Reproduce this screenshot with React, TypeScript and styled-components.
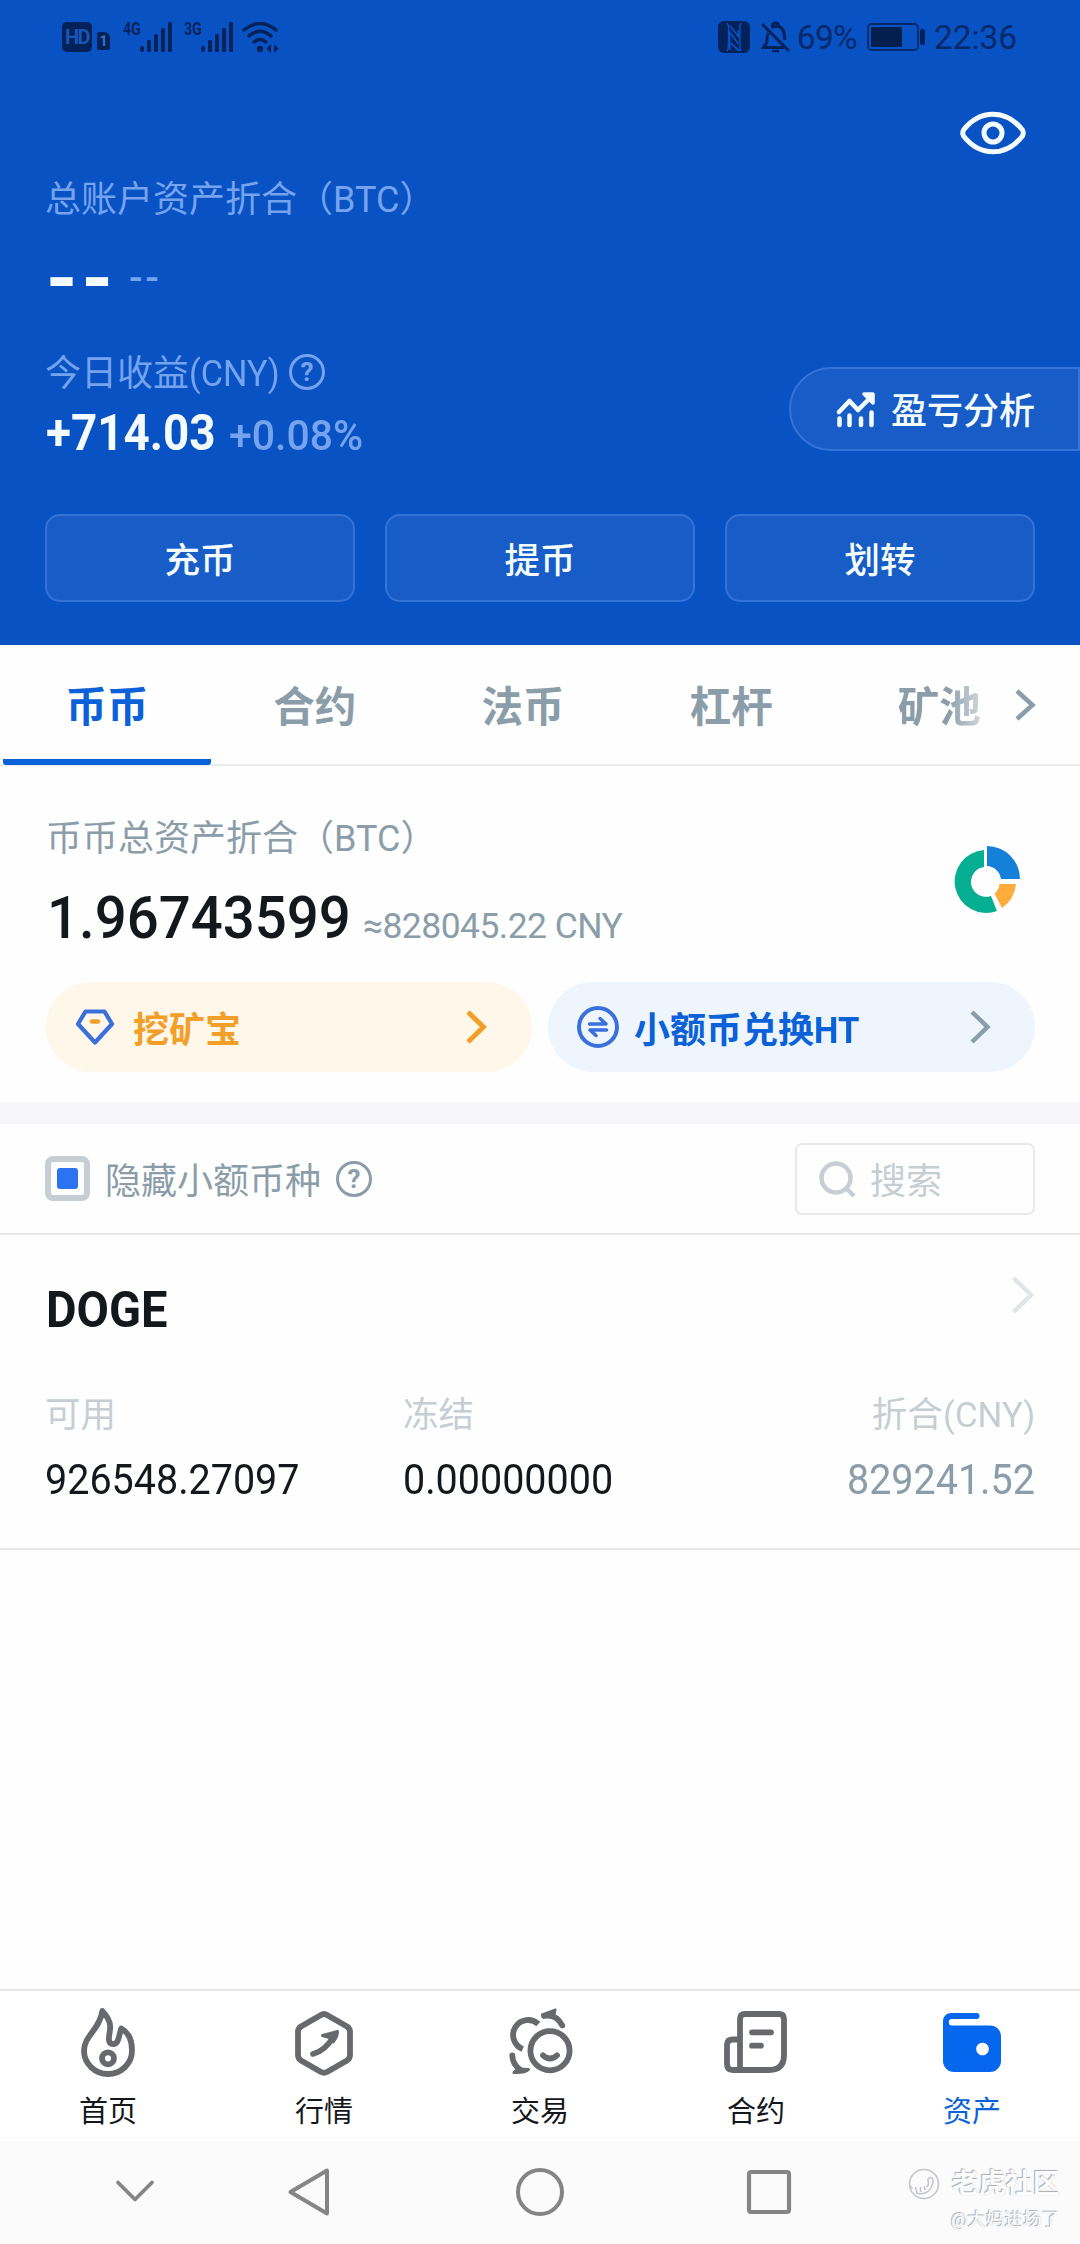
import React from "react";
import styled, { createGlobalStyle } from "styled-components";

const GlobalStyle = createGlobalStyle`
  * { box-sizing: border-box; }
  body { margin: 0; background: #fff; }
`;

const Screen = styled.div`
  position: relative;
  display: flex;
  flex-direction: column;
  width: 1080px;
  height: 2244px;
  overflow: hidden;
  background: #fefefe;
  font-family: Roboto, "Noto Sans CJK SC", sans-serif;
  color: #14181c;
  white-space: nowrap;
`;

/* Squeezes Latin text and digits to a narrower, DIN-like proportion. */
const Narrow = styled.span<{ $k: number; $from?: string; $mr?: number }>`
  display: inline-block;
  margin-right: ${(p) => p.$mr ?? 0}px;
  transform: scaleX(${(p) => p.$k});
  transform-origin: ${(p) => p.$from ?? "left"};
`;

/* ---------- header ---------- */

const Header = styled.header`
  height: 645px;
  background: #0852c4;
  color: #f4fcff;
  display: flex;
  flex-direction: column;
`;

const StatusBar = styled.div`
  height: 74px;
  padding: 0 63px 0 62px;
  display: flex;
  align-items: center;
  justify-content: space-between;
  color: #06296b;
`;

const StatusGroup = styled.div`
  display: flex;
  align-items: center;
`;

const StatusText = styled.span<{ $ml: number; $ls: number }>`
  margin-left: ${(p) => p.$ml}px;
  font-size: 33.5px;
  line-height: 40px;
  letter-spacing: ${(p) => p.$ls}px;
  padding-top: 2px;
`;

const HdBadge = styled.span`
  width: 30px;
  height: 30px;
  border-radius: 5px;
  background: #04225a;
  color: #1c56b4;
  font-size: 20px;
  font-weight: 700;
  line-height: 31px;
  letter-spacing: -1.6px;
  text-align: center;
`;

const SimBadge = styled.span`
  width: 13px;
  height: 18px;
  margin: 8px 13px 0 5px;
  border-radius: 2px 6px 2px 2px;
  background: #04225a;
  color: #3a72cc;
  font-size: 14px;
  font-weight: 700;
  line-height: 19px;
  text-align: center;
`;

const NetText = styled.span`
  align-self: flex-start;
  width: 17px;
  font-size: 18.5px;
  font-weight: 700;
  line-height: 20px;
  margin-top: -3px;
  color: #04225a;
  transform: scaleX(0.76);
  transform-origin: left;
`;

const Bars = styled.svg<{ $mr: number }>`
  width: 32px;
  height: 30px;
  margin-right: ${(p) => p.$mr}px;
`;

const Icon = styled.svg<{ $w: number; $h: number; $ml?: number }>`
  flex: none;
  width: ${(p) => p.$w}px;
  height: ${(p) => p.$h}px;
  margin-left: ${(p) => p.$ml ?? 0}px;
`;

const EyeRow = styled.div`
  height: 98px;
  padding: 37px 54px 0 0;
  display: flex;
  justify-content: flex-end;
  align-items: flex-start;
`;

const Caption = styled.div<{ $tone: string }>`
  display: flex;
  align-items: center;
  height: 48px;
  font-size: 36px;
  line-height: 48px;
  color: ${(p) => p.$tone};
`;

const CaptionText = styled.span`
  padding-top: 4px;
`;

/* The TC face centres full-width brackets in their em box. */
const Bracket = styled.span`
  font-family: "Noto Sans CJK TC", sans-serif;
`;

const HeaderCaption = styled(Caption)`
  padding-left: 45px;
`;

const HiddenBalance = styled.div`
  height: 128px;
  padding: 24px 0 0 46px;
  display: flex;
  align-items: baseline;
  line-height: 70px;
`;

const HiddenMain = styled.span`
  font-size: 80px;
  font-weight: 700;
  letter-spacing: 4px;
`;

const HiddenSub = styled.span`
  margin-left: 12px;
  font-size: 40px;
  font-weight: 500;
  letter-spacing: 2.5px;
  color: #76a3ee;
  transform: translateY(-14px);
`;

const ProfitRow = styled.div`
  display: flex;
  justify-content: space-between;
  align-items: flex-start;
  height: 166px;
  padding-left: 45px;
`;

const ProfitLabelText = styled.span`
  width: 244px;
  padding-top: 4px;
`;

const ProfitFigures = styled.div`
  display: flex;
  align-items: baseline;
  line-height: 56px;
  margin-top: 9px;
`;

const ProfitMain = styled.span`
  width: 184px;
  padding-left: 1px;
  font-size: 50px;
  font-weight: 700;
`;

const ProfitRate = styled.span`
  font-size: 42px;
  font-weight: 500;
  color: #76a3ee;
`;

const AnalysisButton = styled.button`
  width: 291px;
  height: 84px;
  margin-top: 19px;
  padding: 0 0 0 45px;
  display: flex;
  align-items: center;
  border: 2px solid #3473d8;
  border-radius: 42px 0 0 42px;
  background: #185cc7;
  color: #f4fcff;
  font: 500 36px/48px Roboto, "Noto Sans CJK SC", sans-serif;
`;

const ButtonLabel = styled.span`
  margin-left: 15px;
  padding-top: 5px;
`;

const Actions = styled.div`
  display: grid;
  grid-template-columns: repeat(3, 310px);
  gap: 30px;
  padding-left: 45px;
`;

const ActionButton = styled.button`
  height: 88px;
  border: 2px solid #3473d8;
  border-radius: 15px;
  background: #185cc7;
  color: #f4fcff;
  font: 500 35.5px/48px Roboto, "Noto Sans CJK SC", sans-serif;
  padding: 6px 0 0;
`;

/* ---------- tabs ---------- */

const Tabs = styled.nav`
  display: flex;
  height: 121px;
  padding-left: 3px;
  border-bottom: 2px solid #e9ebed;
`;

const Tab = styled.div<{ $active?: boolean; $fade?: boolean }>`
  flex: none;
  display: flex;
  align-items: center;
  justify-content: center;
  width: 208.2px;
  height: 120px;
  padding-right: ${(p) => (p.$active ? 0 : 1)}px;
  padding-bottom: 2px;
  font-size: 41.5px;
  font-weight: 700;
  color: ${(p) => (p.$active ? "#0b61d8" : "#8b9da9")};
  background: ${(p) =>
    p.$active ? "linear-gradient(#0b61d8, #0b61d8) bottom / 100% 6px no-repeat" : "none"};
  border-radius: 3px;
  ${(p) =>
    p.$fade &&
    `-webkit-mask-image: linear-gradient(90deg, #000 112px, rgba(0,0,0,0.3) 150px);`}
`;

const TabMore = styled.div`
  display: flex;
  align-items: center;
  margin-left: -29px;
`;

/* ---------- account card ---------- */

const Summary = styled.section`
  height: 336px;
  padding: 45px 45px 0 46px;
  display: flex;
  flex-direction: column;
`;

const SummaryTop = styled.div`
  display: flex;
  justify-content: space-between;
  height: 171px;
`;

const Amount = styled.div`
  display: flex;
  align-items: baseline;
  line-height: 70px;
  margin-top: 24px;
`;

const AmountMain = styled.span`
  width: 317px;
  padding-left: 1px;
  font-size: 59px;
  font-weight: 500;
`;

const AmountSub = styled.span`
  font-size: 35.5px;
  letter-spacing: -0.55px;
  color: #8b9da9;
`;

const Pills = styled.div`
  display: grid;
  grid-template-columns: 486px 487px;
  gap: 16px;
`;

const Pill = styled.div<{ $bg: string; $fg: string }>`
  display: flex;
  align-items: center;
  height: 90px;
  padding: 0 45px 0 29px;
  border-radius: 45px;
  background: ${(p) => p.$bg};
  color: ${(p) => p.$fg};
  font-size: 36px;
  font-weight: 700;
  &:last-child {
    padding-right: 44px;
  }
`;

const PillText = styled.span<{ $ml: number }>`
  flex: 1;
  margin-left: ${(p) => p.$ml}px;
  padding-bottom: 1px;
`;

/* ---------- filter ---------- */

const Band = styled.div`
  height: 22px;
  background: #f5f5fa;
`;

const Filter = styled.div`
  display: flex;
  align-items: center;
  justify-content: space-between;
  height: 111px;
  padding: 0 45px;
  border-bottom: 2px solid #e6e7e9;
`;

const FilterLeft = styled.label`
  display: flex;
  align-items: center;
  font-size: 36px;
  color: #8b9da9;
`;

const CheckBox = styled.span`
  width: 45px;
  height: 45px;
  margin-right: 15px;
  display: flex;
  align-items: center;
  justify-content: center;
  border: 6px solid #c6ced3;
  border-radius: 8px;
  &::after {
    content: "";
    width: 21px;
    height: 21px;
    border-radius: 3px;
    background: #2b73f0;
  }
`;

const FilterText = styled.span`
  width: 231px;
  padding-bottom: 1px;
`;

const SearchBox = styled.div`
  display: flex;
  align-items: center;
  width: 240px;
  height: 72px;
  padding-left: 21px;
  border: 2px solid #e7e9eb;
  border-radius: 7px;
  color: #c6ced3;
  font-size: 36px;
`;

const SearchText = styled.span`
  margin-left: 14px;
  padding-bottom: 1px;
`;

/* ---------- asset row ---------- */

const Asset = styled.section`
  height: 315px;
  padding: 33px 45px 0;
  border-bottom: 2px solid #e6e8ea;
`;

const AssetHead = styled.div`
  display: flex;
  justify-content: space-between;
  height: 123px;
`;

const AssetName = styled.h2`
  margin: 10px 0 0 1px;
  font-size: 50px;
  line-height: 64px;
  font-weight: 700;
`;

const AssetGrid = styled.div`
  display: grid;
  grid-template-columns: 358px 1fr auto;
`;

const Field = styled.div<{ $right?: boolean }>`
  display: flex;
  flex-direction: column;
  align-items: ${(p) => (p.$right ? "flex-end" : "flex-start")};
`;

const FieldLabel = styled.span`
  font-size: 35.5px;
  line-height: 48px;
  color: #c6ced3;
`;

const FieldValue = styled.span<{ $muted?: boolean }>`
  margin-top: 15px;
  font-size: 42px;
  line-height: 52px;
  color: ${(p) => (p.$muted ? "#8b9da9" : "#14181c")};
`;

/* ---------- bottom ---------- */

const Spacer = styled.div`
  flex: 1;
`;

const BottomNav = styled.nav`
  display: grid;
  grid-template-columns: repeat(5, 216px);
  height: 152px;
  border-top: 2px solid #e6e7e9;
  background: #fff;
`;

const NavItem = styled.div<{ $active?: boolean }>`
  display: flex;
  flex-direction: column;
  align-items: center;
  padding-top: 13px;
  font-size: 29px;
  line-height: 40px;
  color: ${(p) => (p.$active ? "#0b61d8" : "#14181c")};
`;

const NavLabel = styled.span`
  margin-top: 12px;
`;

const SystemBar = styled.div`
  display: flex;
  align-items: center;
  height: 103px;
  padding-left: 114px;
  padding-bottom: 1px;
  background: #fbfbfb;
`;

const Watermark = styled.div`
  position: absolute;
  right: 20px;
  bottom: 11px;
  display: flex;
  flex-direction: column;
  align-items: flex-end;
  color: #fcfcfc;
  text-shadow: -1px -1px 1px #a9acb2, 0 0 1px #c8cad0;
`;

const WatermarkBrand = styled.div`
  display: flex;
  align-items: center;
  gap: 12px;
  font-size: 27px;
  font-weight: 700;
  line-height: 36px;
`;

const WatermarkUser = styled.div`
  margin-top: 5px;
  font-size: 18.5px;
  line-height: 26px;
`;

/* ---------- drawings ---------- */

const SignalBars = ({ mr }: { mr: number }) => (
  <Bars $mr={mr} viewBox="0 0 32 30" fill="#04225a">
    <rect x="0" y="24" width="4" height="6" rx="2" />
    <rect x="7" y="18" width="4" height="12" rx="1.5" />
    <rect x="14" y="12" width="4" height="18" rx="1.5" />
    <rect x="21" y="6" width="4" height="24" rx="1.5" />
    <rect x="28" y="0" width="4" height="30" rx="1.5" />
  </Bars>
);

const Chevron = ({ w, h, color, sw = 4.5 }: { w: number; h: number; color: string; sw?: number }) => (
  <Icon $w={w} $h={h} viewBox={`0 0 ${w} ${h}`} fill="none" stroke={color} strokeWidth={sw}>
    <path d={`M2 2 L${w - 3.5} ${h / 2} L2 ${h - 2}`} />
  </Icon>
);

const HelpRing = styled.span<{ $tone: string }>`
  display: flex;
  align-items: center;
  justify-content: center;
  width: 36px;
  height: 36px;
  border: 3px solid ${(p) => p.$tone};
  border-radius: 50%;
  color: ${(p) => p.$tone};
  font-size: 26px;
  font-weight: 700;
  line-height: 30px;
`;

const BtcCaption = ({ text }: { text: string }) => (
  <CaptionText>
    {text}
    <Bracket lang="zh-TW">（</Bracket>
    BTC
    <Bracket lang="zh-TW">）</Bracket>
  </CaptionText>
);

const navIcons: Record<string, React.ReactNode> = {
  首页: (
    <>
      <path d="M30.3 7 C33.500 10 38.500 17 38.200 23 C38 29 36.500 32 37 36 C37.500 41.500 44 41.500 46 36 C47.500 32 48 28 49.300 24.500 C56 28 60 36 60 46.500 A24 23.500 0 0 1 12 46.500 C12 32 28 25 30.300 7Z" />
      <circle cx="36" cy="54.3" r="6" />
    </>
  ),
  行情: (
    <>
      <path d="M33 11 Q36 9 39 11 L59 22.5 Q62 24.5 62 28 V51 Q62 54.5 59 56.5 L39 68 Q36 69.5 33 68 L13 56.5 Q10 54.5 10 51 V28 Q10 24.5 13 22.5Z" />
      <path d="M25 50 Q37 47 46 32" strokeWidth="5.6" />
      <path d="M34.5 31.5 L49.5 27.5 Q49.5 33 45 38 L41.5 33.5Z" fill="#67696d" strokeWidth="3" />
    </>
  ),
  交易: (
    <>
      <circle cx="46" cy="46.7" r="19.6" />
      <path d="M39 51.3 Q46 57.5 53 51.3" />
      <path d="M34.3 20 A15 15 0 1 0 18.7 45" strokeLinecap="butt" />
      <path d="M40 12 Q52 9.500 58.300 21.500" />
      <path d="M38 10.500 L51.500 5.500 L50.500 11 L44 12.500Z" fill="#67696d" strokeWidth="2" />
      <path d="M8.300 51.500 Q8.500 60 16 65.500" />
      <path d="M10 68.500 L14 65 L24.500 65.500 Q21 69 10 68.500Z" fill="#67696d" strokeWidth="3" />
    </>
  ),
  合约: (
    <>
      <path d="M20 66 V15 Q20 10 25 10 H59 Q64 10 64 15 V51 Q64 66 49 66 H13 Q7 66 7 60 V41 Q7 35.500 13 35.500 H19" />
      <path d="M32 28.300 H51 M32 41.700 H41" />
    </>
  ),
  资产: (
    <path
      fill="#0566ee"
      stroke="none"
      fillRule="evenodd"
      d="M15 9 H40.500 a3 3 0 0 1 0 6 H16 a3.200 3.200 0 0 0 0 6.400 H54 a11 11 0 0 1 11 11 V57 a11 11 0 0 1 -11 11 H18 a11 11 0 0 1 -11 -11 V17 a8 8 0 0 1 8 -8Z M46.500 38.700 a6.300 6.300 0 1 0 0.010 0Z"
    />
  ),
};

const tabs = ["币币", "合约", "法币", "杠杆"];
const actions = ["充币", "提币", "划转"];

export default function App() {
  return (
    <Screen lang="zh-CN">
      <GlobalStyle />
      <Header>
        <StatusBar>
          <StatusGroup>
            <HdBadge>HD</HdBadge>
            <SimBadge>1</SimBadge>
            <NetText>4G</NetText>
            <SignalBars mr={12} />
            <NetText>3G</NetText>
            <SignalBars mr={9} />
            <Icon $w={37} $h={31} viewBox="0 0 37 31" fill="none" stroke="#04225a" strokeWidth="3.4" strokeLinecap="round">
              <path d="M2 8 Q18 -5 34 8 M7 14 Q18 4.500 29 14 M12 20 Q18 15 24 20" />
              <circle cx="18" cy="27" r="3.200" fill="#04225a" stroke="none" />
              <path d="M24.500 26.500 L29 22 V31Z M36.500 26.500 L32 22 V31Z" fill="#04225a" stroke="none" />
            </Icon>
          </StatusGroup>
          <StatusGroup>
            <Icon $w={32} $h={32} viewBox="0 0 32 32">
              <rect width="32" height="32" rx="6" fill="#04225a" />
              <path d="M9 2 Q11 4 10.500 10 V22 Q10.500 28 9 30 M23 2 Q21.500 4 22 10 V22 Q21.500 28 23 30" stroke="#0852c4" strokeWidth="1.400" fill="none" />
              <path d="M11.500 29 V11 L20.500 23 M11.500 4.500 L20.500 15.500 V9 M12.500 22 L21.500 30" stroke="#0852c4" strokeWidth="1.800" fill="none" />
            </Icon>
            <Icon $w={29} $h={32} $ml={11} viewBox="0 0 29 32" fill="none" stroke="#04225a" strokeWidth="3">
              <path d="M7.500 12 C5.500 15 6.500 19 5.500 22 L2.500 26.500 H23 M10.500 7 C13 4.500 20 4 22.500 10 C24 14 23 17 24 19 M11.500 5 Q11 2 14.500 2 Q18 2 17.500 5" />
              <path d="M2 4 L27 29" strokeLinecap="round" />
              <path d="M11 30 H18" strokeWidth="2.500" />
            </Icon>
            <StatusText $ml={7} $ls={-0.6}>69%</StatusText>
            <Icon $w={59} $h={28} $ml={10} viewBox="0 0 59 28">
              <rect x="1" y="1" width="50" height="26" rx="3.500" fill="none" stroke="#06296b" strokeWidth="1.800" />
              <rect x="4" y="4" width="31" height="20" rx="1" fill="#021f4f" />
              <rect x="53" y="6" width="5" height="16" rx="2" fill="#04225a" />
            </Icon>
            <StatusText $ml={8} $ls={-0.1}>22:36</StatusText>
          </StatusGroup>
        </StatusBar>
        <EyeRow>
          <Icon $w={66} $h={44} viewBox="0 0 66 44" fill="none" stroke="#f4fcff" strokeWidth="5">
            <path d="M3.500 19 C20 -2 46 -2 62.500 19 Q64 22 62.500 25 C46 46 20 46 3.500 25 Q2 22 3.500 19Z" />
            <circle cx="33" cy="22" r="9" />
          </Icon>
        </EyeRow>
        <HeaderCaption $tone="#76a3ee">
          <BtcCaption text="总账户资产折合" />
        </HeaderCaption>
        <HiddenBalance>
          <HiddenMain>--</HiddenMain>
          <HiddenSub>--</HiddenSub>
        </HiddenBalance>
        <ProfitRow>
          <div>
            <Caption $tone="#76a3ee">
              <ProfitLabelText>
                今日收益<Narrow $k={0.95}>(CNY)</Narrow>
              </ProfitLabelText>
              <HelpRing $tone="#76a3ee">?</HelpRing>
            </Caption>
            <ProfitFigures>
              <ProfitMain>
                <Narrow $k={0.915}>+714.03</Narrow>
              </ProfitMain>
              <ProfitRate>
                <Narrow $k={0.975}>+0.08%</Narrow>
              </ProfitRate>
            </ProfitFigures>
          </div>
          <AnalysisButton>
            <Icon $w={40} $h={37} viewBox="0 0 40 37" fill="none" stroke="#f4fcff" strokeWidth="4.500" strokeLinecap="round">
              <path d="M3 21 L13.500 10 L22 19 L36 5" strokeLinejoin="round" />
              <path d="M28 3 H37 V12Z" fill="#f4fcff" strokeWidth="3.500" strokeLinejoin="round" />
              <path d="M3.500 27.500 V34 M13.500 24.500 V34 M25 27.500 V34 M35.500 21.500 V34" />
            </Icon>
            <ButtonLabel>盈亏分析</ButtonLabel>
          </AnalysisButton>
        </ProfitRow>
        <Actions>
          {actions.map((a) => (
            <ActionButton key={a}>{a}</ActionButton>
          ))}
        </Actions>
      </Header>

      <Tabs>
        {tabs.map((t, i) => (
          <Tab key={t} $active={i === 0}>
            {t}
          </Tab>
        ))}
        <Tab $fade>矿池</Tab>
        <TabMore>
          <Chevron w={21} h={32} color="#8b9da9" />
        </TabMore>
      </Tabs>

      <Summary>
        <SummaryTop>
          <div>
            <Caption $tone="#8b9da9">
              <BtcCaption text="币币总资产折合" />
            </Caption>
            <Amount>
              <AmountMain>
                <Narrow $k={0.955}>1.96743599</Narrow>
              </AmountMain>
              <AmountSub>≈828045.22 CNY</AmountSub>
            </Amount>
          </div>
          <Icon $w={84} $h={104} viewBox="951 811 84 104">
            <path fill="#06ae92" d="M984 850 A31.500 31.500 0 1 0 997 911 L991 896 A15 15 0 1 1 984 867Z" />
            <path fill="#1580d8" d="M987 846 A33 33 0 0 1 1020 879 H1001 A15 15 0 0 0 987 866Z" />
            <path fill="#ffab3d" d="M999.500 884 H1016 A33 33 0 0 1 1002 908 L994.500 893.500 Q999 890 999.500 884Z" />
          </Icon>
        </SummaryTop>
        <Pills>
          <Pill $bg="#fff7ea" $fg="#f29f2a">
            <Icon $w={40} $h={38} viewBox="0 0 40 38" fill="none" strokeWidth="4.200" strokeLinejoin="round" strokeLinecap="round">
              <path d="M10.500 3.500 H29.500 L37 16 L20 34.500 L3 16Z" stroke="#3a6fdc" />
              <path d="M17 13.500 H23" stroke="#f29f2a" strokeWidth="4.500" />
            </Icon>
            <PillText $ml={18}>挖矿宝</PillText>
            <Chevron w={21} h={34} color="#f29f2a" sw={5} />
          </Pill>
          <Pill $bg="#eef5fd" $fg="#0b61d8">
            <Icon $w={42} $h={42} viewBox="0 0 42 42" fill="none" stroke="#3a6fdc" strokeWidth="4" strokeLinecap="round" strokeLinejoin="round">
              <circle cx="21" cy="21" r="19" />
              <path d="M12.500 18 H29 L23 12.500 M29.500 24 H13 L19 29.500" strokeWidth="3.500" />
            </Icon>
            <PillText $ml={15}>
              小额币兑换<Narrow $k={0.96}>HT</Narrow>
            </PillText>
            <Chevron w={21} h={34} color="#8b9da9" />
          </Pill>
        </Pills>
      </Summary>

      <Band />

      <Filter>
        <FilterLeft>
          <CheckBox />
          <FilterText>隐藏小额币种</FilterText>
          <HelpRing $tone="#8b9da9">?</HelpRing>
        </FilterLeft>
        <SearchBox>
          <Icon $w={38} $h={38} viewBox="0 0 38 38" fill="none" stroke="#c6ced3" strokeWidth="4.500">
            <circle cx="18" cy="18" r="14.500" />
            <path d="M28 28 L36 36" />
          </Icon>
          <SearchText>搜索</SearchText>
        </SearchBox>
      </Filter>

      <Asset>
        <AssetHead>
          <AssetName>
            <Narrow $k={0.94}>DOGE</Narrow>
          </AssetName>
          <Icon $w={24} $h={54} viewBox="0 0 24 54" fill="none" stroke="#e1e5e8" strokeWidth="4.500">
            <path d="M2.500 10 L20 27 L2.500 44" />
          </Icon>
        </AssetHead>
        <AssetGrid>
          <Field>
            <FieldLabel>可用</FieldLabel>
            <FieldValue>
              <Narrow $k={0.94}>926548.27097</Narrow>
            </FieldValue>
          </Field>
          <Field>
            <FieldLabel>冻结</FieldLabel>
            <FieldValue>
              <Narrow $k={0.94}>0.00000000</Narrow>
            </FieldValue>
          </Field>
          <Field $right>
            <FieldLabel>
              折合<Narrow $k={0.98} $mr={-2}>(CNY)</Narrow>
            </FieldLabel>
            <FieldValue $muted>
              <Narrow $k={0.94} $from="right">829241.52</Narrow>
            </FieldValue>
          </Field>
        </AssetGrid>
      </Asset>

      <Spacer />

      <BottomNav>
        {Object.entries(navIcons).map(([name, icon]) => (
          <NavItem key={name} $active={name === "资产"}>
            <Icon $w={72} $h={76} viewBox="0 0 72 76" fill="none" stroke="#67696d" strokeWidth="5.800" strokeLinecap="round" strokeLinejoin="round">
              {icon}
            </Icon>
            <NavLabel>{name}</NavLabel>
          </NavItem>
        ))}
      </BottomNav>

      <SystemBar>
        <Icon $w={42} $h={50} viewBox="0 0 42 50" fill="none" stroke="#858585" strokeWidth="3.800" strokeLinecap="round" strokeLinejoin="round">
          <path d="M4 15.500 L21 32.500 L38 15.500" />
        </Icon>
        <Icon $w={46} $h={50} $ml={130} viewBox="0 0 46 50" fill="none" stroke="#858585" strokeWidth="4" strokeLinejoin="round">
          <path d="M4.500 25 L41 3.500 V46.500Z" />
        </Icon>
        <Icon $w={50} $h={50} $ml={183} viewBox="0 0 50 50" fill="none" stroke="#858585" strokeWidth="4">
          <circle cx="25" cy="25" r="22" />
        </Icon>
        <Icon $w={50} $h={50} $ml={179} viewBox="0 0 50 50" fill="none" stroke="#858585" strokeWidth="4.200" strokeLinejoin="round">
          <rect x="5" y="5" width="40" height="40" rx="2" />
        </Icon>
      </SystemBar>

      <Watermark>
        <WatermarkBrand>
          <Icon $w={32} $h={32} viewBox="0 0 32 32" fill="none" stroke="#c3c5ca" strokeWidth="1.500">
            <circle cx="16" cy="16" r="14.500" />
            <path d="M2.500 17.500 L4.500 21 M7.500 19 L9 25 M12.500 19 V24 M16 18.500 L17.500 22 M8 25 Q12 26.500 17 25 Q24 22 25 14 Q25.500 9 22 9.500 Q18.500 11 20.500 14 Q21 17 18.500 19" />
          </Icon>
          老虎社区
        </WatermarkBrand>
        <WatermarkUser>@大妈进场了</WatermarkUser>
      </Watermark>
    </Screen>
  );
}
